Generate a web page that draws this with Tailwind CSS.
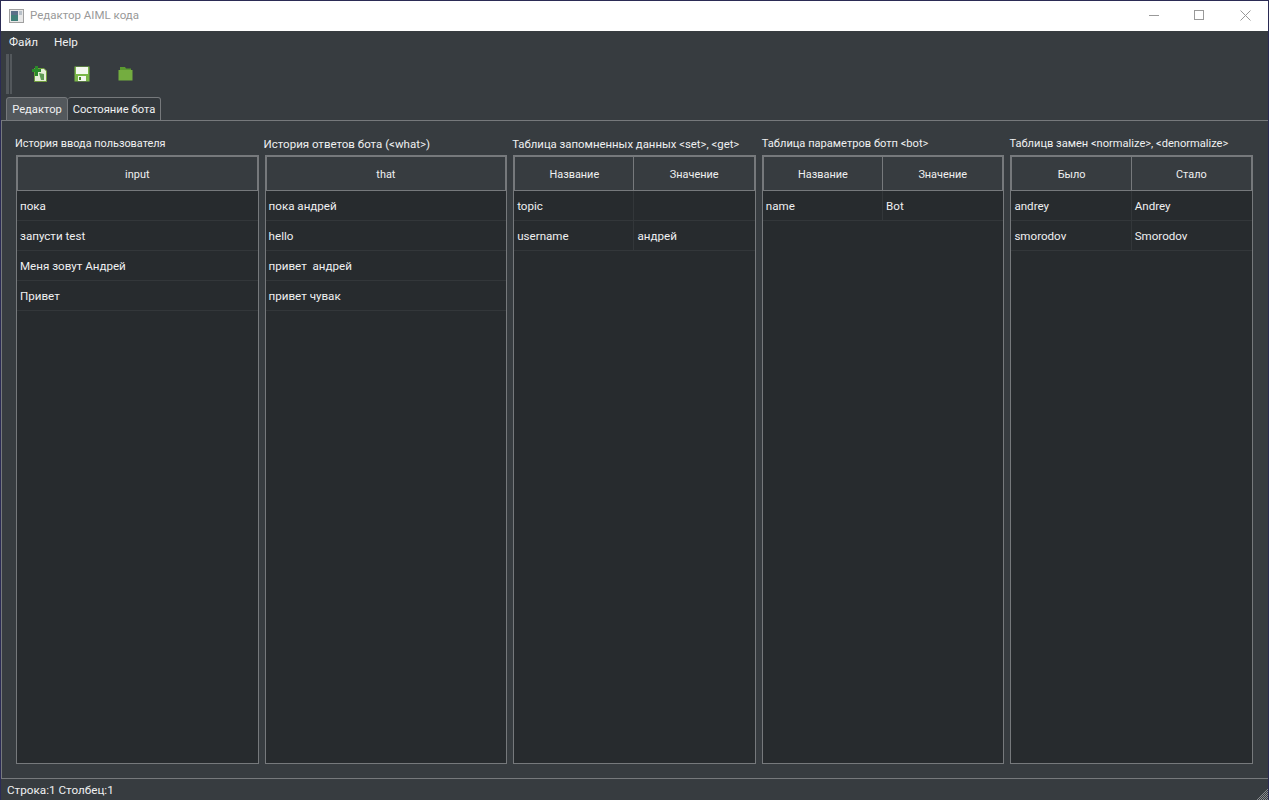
<!DOCTYPE html>
<html lang="ru">
<head>
    <meta charset="UTF-8">
    <title>Редактор AIML кода</title>
    <script src="https://cdn.jsdelivr.net/npm/@tailwindcss/browser@4"></script>
</head>
<body class="bg-[#2b2b55]">
<div class="w-[1269px] h-[800px] pt-px pl-px pr-px overflow-hidden font-['Roboto','Open_Sans',sans-serif] text-[10.9px] text-[#eff0f1]">
    <div class="relative flex flex-col h-full bg-[#373c40]">
        <!-- Title bar -->
        <div class="flex items-center h-[30px] shrink-0 bg-white text-[#999999] text-[11.5px]">
            <svg class="ml-2 mr-[6px]" width="15" height="14" viewBox="0 0 15 14">
                <rect x="0.5" y="0.5" width="14" height="13" fill="#e8e8e8" stroke="#a0a0a0"/>
                <rect x="2" y="2" width="7" height="10" fill="#3f7f78"/>
                <rect x="2" y="2" width="7" height="4" fill="#5a6f88"/>
                <rect x="10" y="2" width="3" height="4" fill="#b8c0c8"/>
            </svg>
            <span>Редактор AIML кода</span>
            <div class="ml-auto flex items-center -mt-[2px]">
                <svg class="mr-[34px]" width="11" height="11" viewBox="0 0 11 11"><path d="M0 5.5H10" stroke="#999" fill="none"/></svg>
                <svg class="mr-[35px]" width="11" height="11" viewBox="0 0 11 11"><rect x="0.5" y="0.5" width="9" height="9" stroke="#999" fill="none"/></svg>
                <svg class="mr-[17px]" width="11" height="11" viewBox="0 0 11 11"><path d="M0.5 0.5L10.5 10.5M10.5 0.5L0.5 10.5" stroke="#999" fill="none"/></svg>
            </div>
        </div>

        <!-- Menu -->
        <div class="flex items-center gap-4 h-[22px] shrink-0 pl-2 pt-[2px] text-[11.7px]">
            <span>Файл</span>
            <span>Help</span>
        </div>

        <!-- Toolbar -->
        <div class="flex items-center h-[44px] shrink-0 pl-[5px] pb-[3px]">
            <div class="flex gap-px h-10">
                <div class="w-[3px] bg-[#53585c]"></div>
                <div class="w-[2px] bg-[#53585c]"></div>
            </div>
            <svg class="ml-[20px]" width="16" height="16" viewBox="0 0 16 16">
                <path d="M2.5 2.5H12L14.5 5V15.5H2.5Z" fill="#e6efd8" stroke="#6f9d3c"/>
                <path d="M7 7L12 8V14H9Z" fill="#5f9b55"/>
                <path d="M3 0H6V3H9V6H6V10H3V6H0V3H3Z" fill="#2a8a2a"/>
            </svg>
            <svg class="ml-[26px]" width="16" height="16" viewBox="0 0 16 16">
                <rect x="0.5" y="0.5" width="15" height="15" fill="#7ab648"/>
                <rect x="2" y="1" width="12" height="7" fill="#f4f8ef"/>
                <rect x="4" y="10" width="8" height="5" fill="#f4f8ef"/>
                <rect x="5" y="11" width="2" height="3" fill="#4d8a2a"/>
            </svg>
            <svg class="ml-[28px]" width="15" height="15" viewBox="0 0 15 15">
                <path d="M2 1H7L8 2.5H13V5H2Z" fill="#5b9a30"/>
                <rect x="0.5" y="4" width="14" height="10.5" fill="#74ad40"/>
            </svg>
        </div>

        <!-- Tabs -->
        <div class="flex h-[24px] shrink-0 pl-[5px] -mb-px relative z-10 text-[11.2px]">
            <div class="flex items-center justify-center w-[62px] pt-[2px] rounded-t-[3px] border border-[#76797c] bg-[#53585c]">Редактор</div>
            <div class="flex items-center justify-center w-[93px] pt-[2px] rounded-t-[3px] border border-[#76797c] border-l-0 bg-[#33383c]">Состояние бота</div>
        </div>

        <!-- Tab pane -->
        <div class="flex-1 min-h-0 border border-[#76797c] border-r-0 pl-[14px] pr-[15px] pt-[12px] pb-[14px] grid grid-cols-5 gap-x-[6px]">
            <section class="flex flex-col min-w-0">
                <h2 class="h-[22px] -ml-[1px] leading-[22px] whitespace-nowrap">История ввода пользователя</h2>
                <div class="flex-1 flex flex-col border border-[#76797c] bg-[#272b2e]">
                    <div class="h-[35px] flex items-center justify-center pt-[3px] border border-[#76797c] bg-[#373c40]">input</div>
                    <div class="h-[30px] flex items-center px-[3px] pt-[3px] text-[11.6px] border-b border-[#33373a]">пока</div>
                    <div class="h-[30px] flex items-center px-[3px] pt-[3px] text-[11.6px] border-b border-[#33373a]">запусти test</div>
                    <div class="h-[30px] flex items-center px-[3px] pt-[3px] text-[11.6px] border-b border-[#33373a]">Меня зовут Андрей</div>
                    <div class="h-[30px] flex items-center px-[3px] pt-[3px] text-[11.6px] border-b border-[#33373a]">Привет</div>
                </div>
            </section>
            <section class="flex flex-col min-w-0">
                <h2 class="h-[22px] -ml-[1px] leading-[22px] text-[11.5px] whitespace-nowrap">История ответов бота (&lt;what&gt;)</h2>
                <div class="flex-1 flex flex-col border border-[#76797c] bg-[#272b2e]">
                    <div class="h-[35px] flex items-center justify-center pt-[3px] border border-[#76797c] bg-[#373c40]">that</div>
                    <div class="h-[30px] flex items-center px-[3px] pt-[3px] text-[11.6px] border-b border-[#33373a]">пока андрей</div>
                    <div class="h-[30px] flex items-center px-[3px] pt-[3px] text-[11.6px] border-b border-[#33373a]">hello</div>
                    <div class="h-[30px] flex items-center px-[3px] pt-[3px] text-[11.6px] border-b border-[#33373a] whitespace-pre">привет  андрей</div>
                    <div class="h-[30px] flex items-center px-[3px] pt-[3px] text-[11.6px] border-b border-[#33373a]">привет чувак</div>
                </div>
            </section>
            <section class="flex flex-col min-w-0">
                <h2 class="h-[22px] -ml-[1px] leading-[22px] text-[11.35px] whitespace-nowrap">Таблица запомненных данных &lt;set&gt;, &lt;get&gt;</h2>
                <div class="flex-1 flex flex-col border border-[#76797c] bg-[#272b2e]">
                    <div class="h-[35px] grid grid-cols-2 border border-[#76797c] bg-[#373c40]">
                        <div class="flex items-center justify-center pt-[3px] border-r border-[#76797c]">Название</div>
                        <div class="flex items-center justify-center pt-[3px]">Значение</div>
                    </div>
                    <div class="h-[30px] grid grid-cols-2 text-[11.6px] border-b border-[#33373a]">
                        <div class="flex items-center px-[3px] pt-[3px] border-r border-[#33373a]">topic</div>
                        <div class="flex items-center px-[3px] pt-[3px]"></div>
                    </div>
                    <div class="h-[30px] grid grid-cols-2 text-[11.6px] border-b border-[#33373a]">
                        <div class="flex items-center px-[3px] pt-[3px] border-r border-[#33373a]">username</div>
                        <div class="flex items-center px-[3px] pt-[3px]">андрей</div>
                    </div>
                </div>
            </section>
            <section class="flex flex-col min-w-0">
                <h2 class="h-[22px] leading-[22px] text-[11.1px] whitespace-nowrap">Таблица параметров ботп &lt;bot&gt;</h2>
                <div class="flex-1 flex flex-col border border-[#76797c] bg-[#272b2e]">
                    <div class="h-[35px] grid grid-cols-2 border border-[#76797c] bg-[#373c40]">
                        <div class="flex items-center justify-center pt-[3px] border-r border-[#76797c]">Название</div>
                        <div class="flex items-center justify-center pt-[3px]">Значение</div>
                    </div>
                    <div class="h-[30px] grid grid-cols-2 text-[11.6px] border-b border-[#33373a]">
                        <div class="flex items-center px-[3px] pt-[3px] border-r border-[#33373a]">name</div>
                        <div class="flex items-center px-[3px] pt-[3px]">Bot</div>
                    </div>
                </div>
            </section>
            <section class="flex flex-col min-w-0">
                <h2 class="h-[22px] -ml-[1px] leading-[22px] text-[11.1px] whitespace-nowrap">Таблицв замен &lt;normalize&gt;, &lt;denormalize&gt;</h2>
                <div class="flex-1 flex flex-col border border-[#76797c] bg-[#272b2e]">
                    <div class="h-[35px] grid grid-cols-2 border border-[#76797c] bg-[#373c40]">
                        <div class="flex items-center justify-center pt-[3px] border-r border-[#76797c]">Было</div>
                        <div class="flex items-center justify-center pt-[3px]">Стало</div>
                    </div>
                    <div class="h-[30px] grid grid-cols-2 text-[11.6px] border-b border-[#33373a]">
                        <div class="flex items-center px-[3px] pt-[3px] border-r border-[#33373a]">andrey</div>
                        <div class="flex items-center px-[3px] pt-[3px]">Andrey</div>
                    </div>
                    <div class="h-[30px] grid grid-cols-2 text-[11.6px] border-b border-[#33373a]">
                        <div class="flex items-center px-[3px] pt-[3px] border-r border-[#33373a]">smorodov</div>
                        <div class="flex items-center px-[3px] pt-[3px]">Smorodov</div>
                    </div>
                </div>
            </section>
        </div>

        <!-- Status bar -->
        <div class="h-[21px] shrink-0 flex items-center pl-[6px] pt-[2px] text-[11.7px]">Строка:1 Столбец:1</div>
        <svg class="absolute right-0 bottom-0" width="12" height="12" viewBox="0 0 12 12">
            <defs>
                <pattern id="grip" width="2" height="2" patternUnits="userSpaceOnUse">
                    <rect width="1" height="1" fill="#8a8d90"/>
                    <rect x="1" y="1" width="1" height="1" fill="#8a8d90"/>
                </pattern>
            </defs>
            <path d="M12 0V12H0Z" fill="url(#grip)"/>
        </svg>
    </div>
</div>
</body>
</html>
